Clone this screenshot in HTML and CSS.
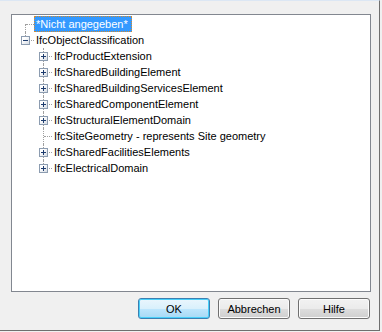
FILE: index.html
```html
<!DOCTYPE html>
<html lang="de">
<head>
  <meta charset="UTF-8">
  <title>Klassifikation wählen</title>
  <link rel="stylesheet" href="styles.css">
</head>
<body>

<div class="dialog">
  <div class="tree">
    <div class="row">
      <span class="cell first"></span>
      <span class="label selected">*Nicht angegeben*</span>
    </div>
    <div class="row">
      <span class="cell last"><span class="box minus"></span></span>
      <span class="label">IfcObjectClassification</span>
    </div>
    <div class="row">
      <span class="cell"></span>
      <span class="cell mid"><span class="box plus"></span></span>
      <span class="label">IfcProductExtension</span>
    </div>
    <div class="row">
      <span class="cell"></span>
      <span class="cell mid"><span class="box plus"></span></span>
      <span class="label">IfcSharedBuildingElement</span>
    </div>
    <div class="row">
      <span class="cell"></span>
      <span class="cell mid"><span class="box plus"></span></span>
      <span class="label">IfcSharedBuildingServicesElement</span>
    </div>
    <div class="row">
      <span class="cell"></span>
      <span class="cell mid"><span class="box plus"></span></span>
      <span class="label">IfcSharedComponentElement</span>
    </div>
    <div class="row">
      <span class="cell"></span>
      <span class="cell mid"><span class="box plus"></span></span>
      <span class="label">IfcStructuralElementDomain</span>
    </div>
    <div class="row">
      <span class="cell"></span>
      <span class="cell mid"></span>
      <span class="label">IfcSiteGeometry - represents Site geometry</span>
    </div>
    <div class="row">
      <span class="cell"></span>
      <span class="cell mid"><span class="box plus"></span></span>
      <span class="label">IfcSharedFacilitiesElements</span>
    </div>
    <div class="row">
      <span class="cell"></span>
      <span class="cell last"><span class="box plus"></span></span>
      <span class="label">IfcElectricalDomain</span>
    </div>
  </div>

  <div class="buttons">
    <button class="btn default">OK</button>
    <button class="btn">Abbrechen</button>
    <button class="btn">Hilfe</button>
  </div>
</div>

</body>
</html>
```

FILE: styles.css
```css
html, body {
  margin: 0;
  padding: 0;
  background: #f0f0f0;
}
body {
  width: 382px;
  height: 332px;
  overflow: hidden;
  font-family: "Liberation Sans", Arial, sans-serif;
  font-size: 11px;
  color: #000;
}
.dialog {
  width: 368px;
  height: 316px;
  border-top: 1px solid #dce7f4;
  border-right: 1px solid #6f6f6f;
  border-bottom: 1px solid #6f6f6f;
  padding: 13px 0 0 11px;
}
.tree {
  box-sizing: border-box;
  width: 360px;
  height: 278px;
  border: 1px solid #828790;
  background: #fff;
  padding: 1px 0 0 4px;
}
.row {
  display: flex;
  height: 16px;
  align-items: stretch;
}
.cell {
  position: relative;
  width: 18px;
  flex: 0 0 18px;
}
/* dotted connector lines */
.cell.first::before,
.cell.mid::before,
.cell.last::before {
  content: "";
  position: absolute;
  left: 9px;
  border-left: 1px dotted #a0a0a0;
}
.cell.first::before { top: 8px; bottom: 0; }
.cell.mid::before { top: 0; bottom: 0; }
.cell.last::before { top: 0; height: 8px; }
.cell.first::after,
.cell.mid::after,
.cell.last::after {
  content: "";
  position: absolute;
  left: 10px;
  right: 0;
  top: 8px;
  border-top: 1px dotted #a0a0a0;
}
.box {
  position: absolute;
  z-index: 1;
  left: 5px;
  top: 4px;
  width: 9px;
  height: 9px;
  box-sizing: border-box;
  border: 1px solid #8c9cb0;
  background: linear-gradient(135deg, #ffffff 30%, #d6dce4);
}
.box::before,
.box::after {
  content: "";
  position: absolute;
  background: #1e3c6e;
}
.box::before {
  left: 1px;
  top: 3px;
  width: 5px;
  height: 1px;
}
.plus::after {
  left: 3px;
  top: 1px;
  width: 1px;
  height: 5px;
}
.label {
  display: inline-block;
  height: 16px;
  line-height: 14px;
  box-sizing: border-box;
  padding: 0 2px 0 1px;
  border: 1px solid transparent;
  white-space: nowrap;
}
.label.selected {
  background: #3399ff;
  color: #fff;
  border: 1px dotted #d48a2c;
  padding-right: 3px;
}
.buttons {
  width: 359px;
  display: flex;
  justify-content: flex-end;
  gap: 8px;
  margin-top: 6px;
}
.btn {
  width: 72px;
  height: 21px;
  padding: 0;
  font-family: "Liberation Sans", Arial, sans-serif;
  font-size: 11px;
  color: #000;
  border: 1px solid #707070;
  border-radius: 3px;
  background: linear-gradient(#f2f2f2 0%, #ebebeb 50%, #dddddd 51%, #cfcfcf 100%);
  box-shadow: inset 0 0 0 1px #fcfcfc;
}
.btn.default {
  border-color: #3c7fb1;
  background: linear-gradient(#eaf6fd 0%, #d9f0fc 50%, #bee6fd 51%, #a7d9f5 100%);
  box-shadow: inset 0 0 0 1px #48d0fa;
}
```
